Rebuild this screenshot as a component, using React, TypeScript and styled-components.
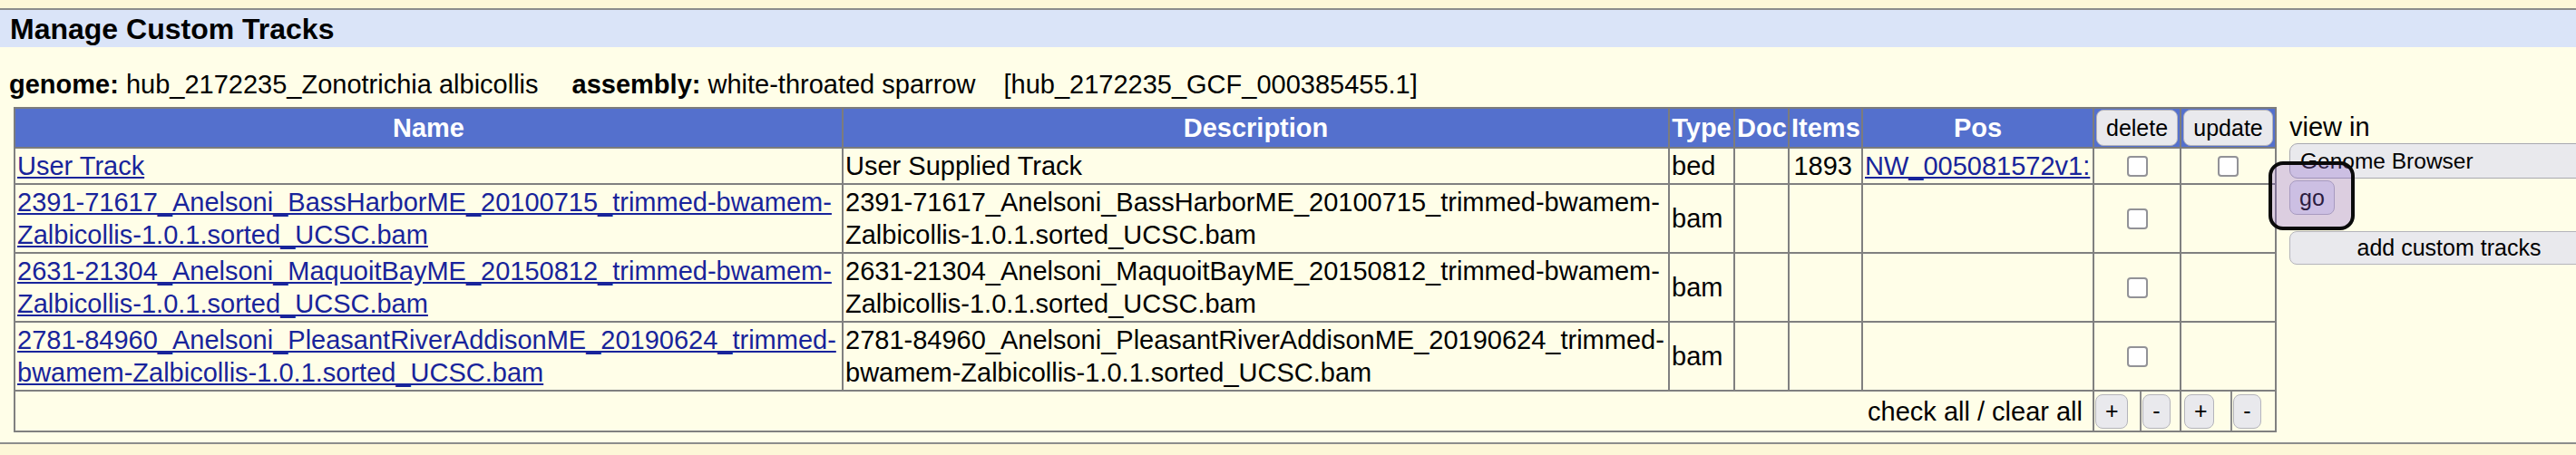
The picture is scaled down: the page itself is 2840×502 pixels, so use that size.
import React from "react";
import styled, { createGlobalStyle } from "styled-components";

const GlobalStyle = createGlobalStyle`
  html, body {
    margin: 0;
    padding: 0;
    background: #fdf7d8;
    overflow: hidden;
  }
  body {
    font-family: "Liberation Sans", Arial, Helvetica, sans-serif;
    color: #000;
  }
`;

const FONT = `"Liberation Sans", Arial, Helvetica, sans-serif`;

const Page = styled.div`
  width: 2840px;
  height: 502px;
  box-sizing: border-box;
  padding-top: 9px;
  overflow: hidden;
  background: #fdf7d8;
`;

const Frame = styled.div`
  background: #fffee8;
  border-top: 2px solid #8c8c8c;
  border-bottom: 2px solid #8c8c8c;
  padding-bottom: 11px;
`;

const TitleBar = styled.div`
  height: 41px;
  box-sizing: border-box;
  padding: 2px 0 0 11px;
  display: flex;
  align-items: center;
  background: #dae4f8;
  font-size: 32px;
  font-weight: bold;
`;

const Content = styled.div`
  padding: 25px 0 0 10px;
`;

const InfoLine = styled.div`
  height: 33px;
  margin-bottom: 8px;
  display: flex;
  font-size: 29px;
  line-height: 33px;
  white-space: pre;
`;

const Field = styled.span<{ $gap?: number }>`
  margin-left: ${(p) => p.$gap ?? 0}px;
`;

const Label = styled.b`
  font-weight: bold;
`;

const MainRow = styled.div`
  display: flex;
  align-items: flex-start;
  gap: 14px;
  padding-left: 5px;
`;

const TracksTable = styled.table`
  flex-shrink: 0;
  width: 2494px;
  table-layout: fixed;
  border-collapse: collapse;
  border: 2px solid #858585;
  font-size: 29px;
  line-height: 36px;
`;

const HeadCell = styled.th`
  background: #5470cd;
  color: #fff;
  font-weight: bold;
  text-align: center;
  vertical-align: middle;
  white-space: nowrap;
  border: 2px solid #7c7c7c;
  padding: 1px 2px;
`;

const Cell = styled.td<{ $align?: "left" | "right" | "center"; $padRight?: number }>`
  border: 2px solid #808080;
  padding: 1px ${(p) => p.$padRight ?? 2}px 1px 2px;
  vertical-align: middle;
  text-align: ${(p) => p.$align ?? "left"};
`;

const FootCell = styled.td`
  border: 2px solid #808080;
  padding: 1px 11px 1px 2px;
  vertical-align: middle;
  text-align: right;
  white-space: nowrap;
`;

const SplitCell = styled.td`
  border: 2px solid #808080;
  padding: 0;
  vertical-align: middle;
`;

const Split = styled.div`
  display: flex;
  height: 43px;
`;

const SubCell = styled.div<{ $w?: number; $divider?: boolean; $pad?: number }>`
  display: flex;
  align-items: center;
  box-sizing: border-box;
  padding-left: ${(p) => p.$pad ?? 2}px;
  ${(p) => (p.$w ? `width: ${p.$w}px; flex-shrink: 0;` : "flex: 1;")}
  ${(p) => (p.$divider ? "border-left: 2px solid #8a8a8a;" : "")}
`;

const TrackLink = styled.a`
  color: #18249b;
  text-decoration: underline;
  cursor: pointer;
`;

const CheckWrap = styled.div`
  height: 36px;
  display: flex;
  align-items: center;
  justify-content: center;
`;

const Check = styled.input.attrs({ type: "checkbox" })`
  appearance: none;
  -webkit-appearance: none;
  width: 23px;
  height: 23px;
  margin: 0;
  box-sizing: border-box;
  border: 2.5px solid #929297;
  border-radius: 4px;
  background: #fff;
`;

const Button = styled.button<{ $h?: number; $w?: number }>`
  font-family: ${FONT};
  font-size: 25px;
  line-height: 1;
  color: #000;
  background: #e9e9ed;
  border: 1px solid #b4b4bb;
  border-radius: 8px;
  height: ${(p) => p.$h ?? 38}px;
  ${(p) => (p.$w ? `width: ${p.$w}px;` : "")}
  padding: 0 10px;
  box-sizing: border-box;
  vertical-align: middle;
  cursor: pointer;
`;

const SidePanel = styled.div`
  position: relative;
  flex-shrink: 0;
  width: 352px;
  padding-top: 6px;
  display: flex;
  flex-direction: column;
  align-items: flex-start;
`;

const ViewLabel = styled.div`
  font-size: 29px;
  line-height: 33px;
`;

const ViewSelect = styled.select`
  appearance: none;
  -webkit-appearance: none;
  margin-top: 1px;
  width: 352px;
  height: 39px;
  box-sizing: border-box;
  padding: 0 0 0 11px;
  font-family: ${FONT};
  font-size: 24.5px;
  color: #000;
  background: #e9e9ed;
  border: 1px solid #a9a9b1;
  border-radius: 9px;
`;

const GoButton = styled(Button)`
  margin-top: 2px;
`;

const WideButton = styled(Button)`
  margin-top: 18px;
  width: 352px;
`;

const FocusRing = styled.div`
  position: absolute;
  left: -23px;
  top: 60px;
  width: 95px;
  height: 76px;
  box-sizing: border-box;
  border: 4.5px solid #0a0a0a;
  border-radius: 16px;
  background: rgba(138, 97, 205, 0.3);
  pointer-events: none;
`;

type Track = {
  name: string;
  desc: string;
  type: string;
  items?: string;
  pos?: string;
  canUpdate?: boolean;
};

const tracks: Track[] = [
  {
    name: "User Track",
    desc: "User Supplied Track",
    type: "bed",
    items: "1893",
    pos: "NW_005081572v1:",
    canUpdate: true,
  },
  {
    name: "2391-71617_Anelsoni_BassHarborME_20100715_trimmed-bwamem-Zalbicollis-1.0.1.sorted_UCSC.bam",
    desc: "2391-71617_Anelsoni_BassHarborME_20100715_trimmed-bwamem-Zalbicollis-1.0.1.sorted_UCSC.bam",
    type: "bam",
  },
  {
    name: "2631-21304_Anelsoni_MaquoitBayME_20150812_trimmed-bwamem-Zalbicollis-1.0.1.sorted_UCSC.bam",
    desc: "2631-21304_Anelsoni_MaquoitBayME_20150812_trimmed-bwamem-Zalbicollis-1.0.1.sorted_UCSC.bam",
    type: "bam",
  },
  {
    name: "2781-84960_Anelsoni_PleasantRiverAddisonME_20190624_trimmed-bwamem-Zalbicollis-1.0.1.sorted_UCSC.bam",
    desc: "2781-84960_Anelsoni_PleasantRiverAddisonME_20190624_trimmed-bwamem-Zalbicollis-1.0.1.sorted_UCSC.bam",
    type: "bam",
  },
];

const colWidths = [913, 911, 72, 60, 81, 255, 96, 105];

export default function App() {
  return (
    <>
      <GlobalStyle />
      <Page>
        <Frame>
          <TitleBar>Manage Custom Tracks</TitleBar>
          <Content>
            <InfoLine>
              <Field>
                <Label>genome:</Label> hub_2172235_Zonotrichia albicollis
              </Field>
              <Field $gap={37}>
                <Label>assembly:</Label> white-throated sparrow
              </Field>
              <Field $gap={31}>[hub_2172235_GCF_000385455.1]</Field>
            </InfoLine>
            <MainRow>
              <TracksTable>
                <colgroup>
                  {colWidths.map((w, i) => (
                    <col key={i} style={{ width: w }} />
                  ))}
                </colgroup>
                <thead>
                  <tr>
                    <HeadCell>Name</HeadCell>
                    <HeadCell>Description</HeadCell>
                    <HeadCell>Type</HeadCell>
                    <HeadCell>Doc</HeadCell>
                    <HeadCell>Items</HeadCell>
                    <HeadCell>Pos</HeadCell>
                    <HeadCell>
                      <Button $h={40}>delete</Button>
                    </HeadCell>
                    <HeadCell>
                      <Button $h={40}>update</Button>
                    </HeadCell>
                  </tr>
                </thead>
                <tbody>
                  {tracks.map((t) => (
                    <tr key={t.name}>
                      <Cell>
                        <TrackLink>{t.name}</TrackLink>
                      </Cell>
                      <Cell>{t.desc}</Cell>
                      <Cell>{t.type}</Cell>
                      <Cell />
                      <Cell $align="right" $padRight={10}>
                        {t.items ?? ""}
                      </Cell>
                      <Cell $padRight={0}>
                        {t.pos ? <TrackLink>{t.pos}</TrackLink> : null}
                      </Cell>
                      <Cell $align="center">
                        <CheckWrap>
                          <Check />
                        </CheckWrap>
                      </Cell>
                      <Cell $align="center">
                        {t.canUpdate ? (
                          <CheckWrap>
                            <Check />
                          </CheckWrap>
                        ) : null}
                      </Cell>
                    </tr>
                  ))}
                  <tr>
                    <FootCell colSpan={6}>check all / clear all</FootCell>
                    <SplitCell>
                      <Split>
                        <SubCell $w={50} $pad={1}>
                          <Button $w={36}>+</Button>
                        </SubCell>
                        <SubCell $divider $pad={1}>
                          <Button $w={31}>-</Button>
                        </SubCell>
                      </Split>
                    </SplitCell>
                    <SplitCell>
                      <Split>
                        <SubCell $w={54} $pad={3}>
                          <Button $w={33}>+</Button>
                        </SubCell>
                        <SubCell $divider $pad={1}>
                          <Button $w={31}>-</Button>
                        </SubCell>
                      </Split>
                    </SplitCell>
                  </tr>
                </tbody>
              </TracksTable>
              <SidePanel>
                <ViewLabel>view in</ViewLabel>
                <ViewSelect defaultValue="gb">
                  <option value="gb">Genome Browser</option>
                </ViewSelect>
                <GoButton $w={50}>go</GoButton>
                <WideButton $h={37}>add custom tracks</WideButton>
                <FocusRing />
              </SidePanel>
            </MainRow>
          </Content>
        </Frame>
      </Page>
    </>
  );
}
